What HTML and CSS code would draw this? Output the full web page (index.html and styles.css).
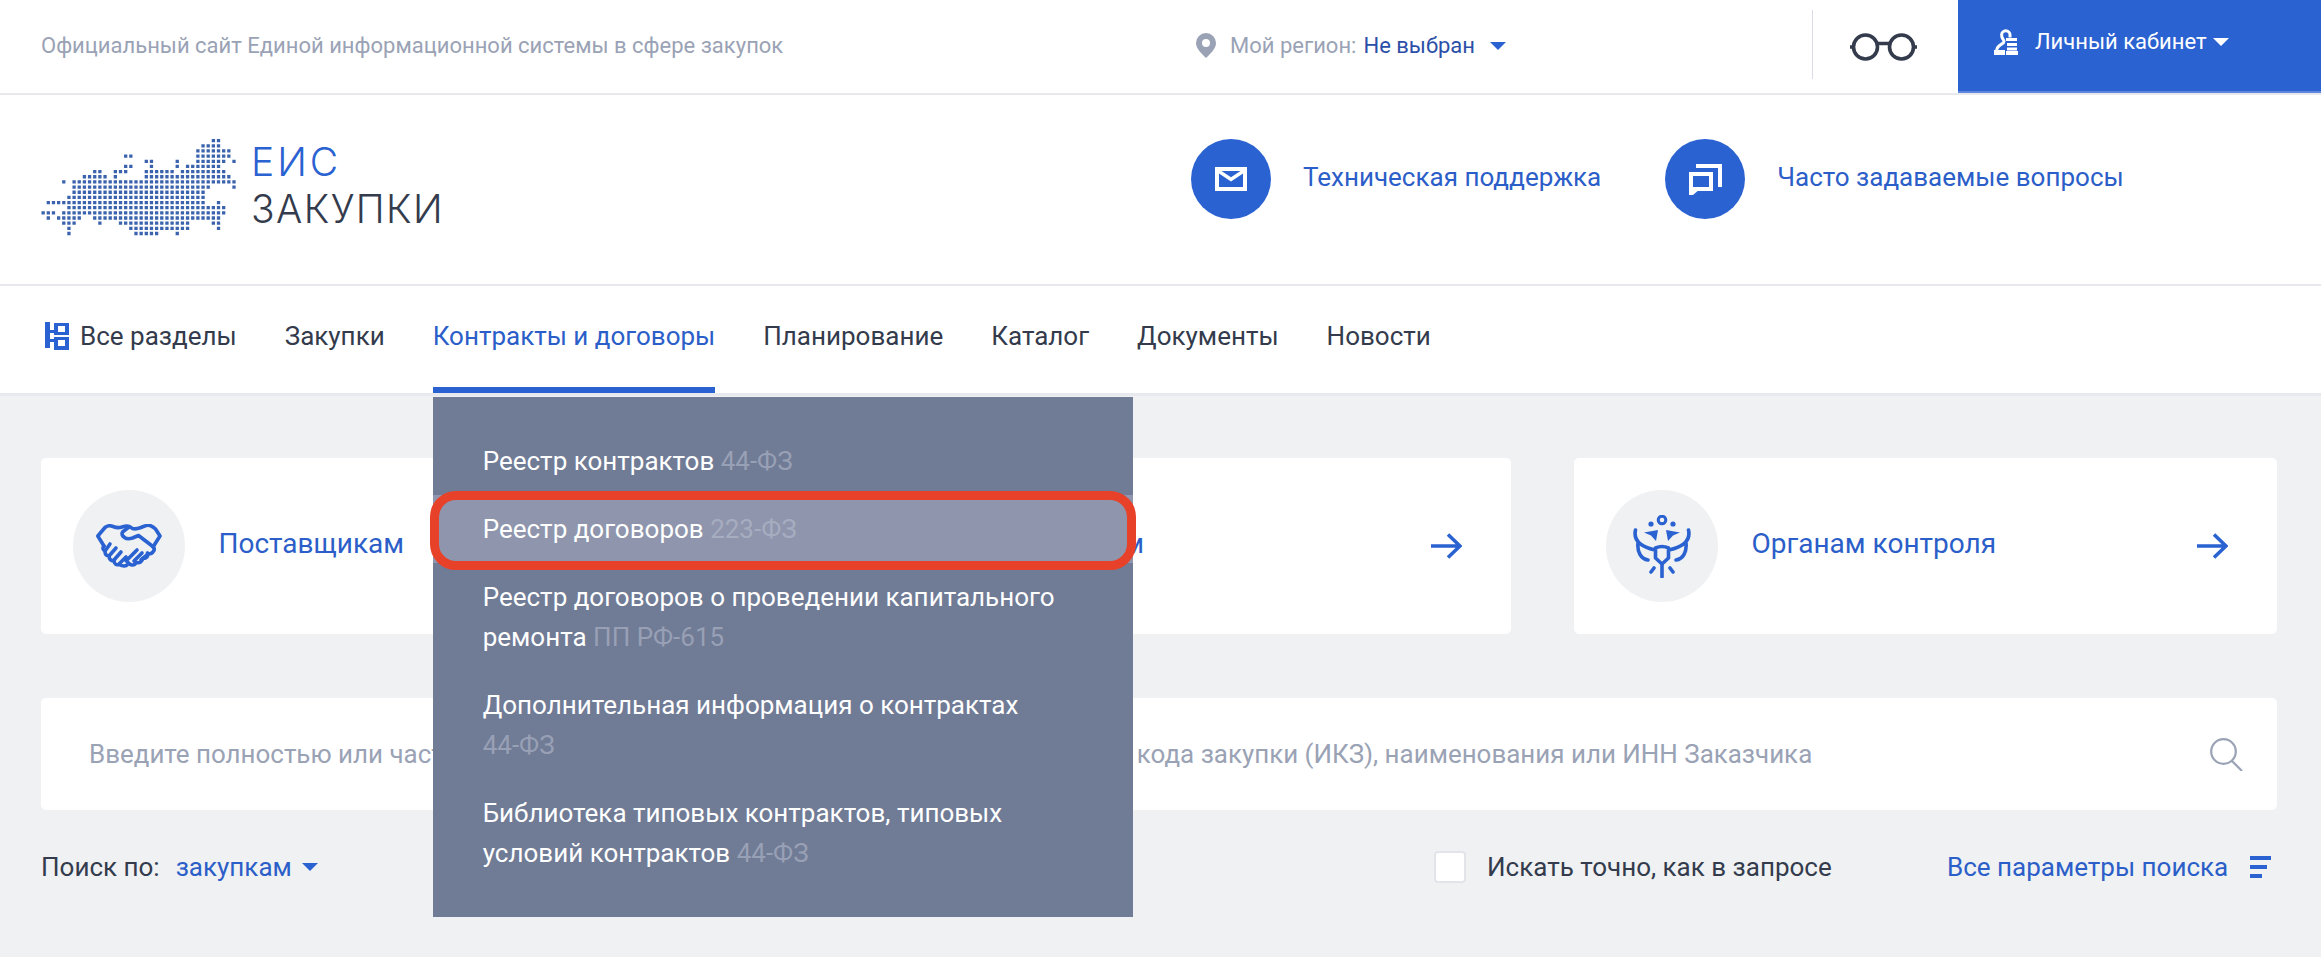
FILE: index.html
```html
<!DOCTYPE html>
<html lang="ru">
<head>
<meta charset="utf-8">
<title>ЕИС Закупки</title>
<link rel="stylesheet" href="styles.css">
</head>
<body>
<header class="topbar">
  <div class="site-name">Официальный сайт Единой информационной системы в сфере закупок</div>
  <div class="region">
    <svg class="pin" viewBox="0 0 20 25"><path fill-rule="evenodd" d="M10 0a10 10 0 0 1 10 10c0 6-6 11-10 15C6 21 0 16 0 10A10 10 0 0 1 10 0zm0 6a4 4 0 1 0 0 8 4 4 0 0 0 0-8z"/></svg>
    <span class="region-label">Мой регион:</span>
    <span class="region-value">Не выбран</span>
    <i class="caret region-caret"></i>
  </div>
  <div class="vision">
    <svg class="glasses" viewBox="0 0 67 28"><g fill="none" stroke="#333b4c" stroke-width="3.6"><circle cx="15.5" cy="14" r="12"/><circle cx="51.5" cy="14" r="12"/><path d="M27 10.5h13M0 14h3.500M63.500 14H67"/></g></svg>
  </div>
  <a class="account">
    <svg class="account-icon" viewBox="0 0 24 26"><g fill="none" stroke="#fff" stroke-width="3"><path d="M16 8.500V6a4.200 4.200 0 0 0-8.400 0c0 4 2.400 4.500 2.400 6.500C10 15.500 3 15 2.500 22"/><path d="M12 10.500h11M13 15.500h10M13 20h10"/></g><path fill="#fff" d="M0 21h11v5H0zM12 22h12v4H12z"/></svg>
    <span>Личный кабинет</span>
    <i class="caret account-caret"></i>
  </a>
</header>

<section class="masthead">
  <div class="logo">
    <svg class="logo-map" viewBox="0 0 38 19"><path fill="none" stroke="#3b63ad" stroke-width=".64" stroke-dasharray=".64 .36" d="M33 .32H34.640M31 1.320H34.640M30 2.320H36.640M16 3.320H17.640M30 3.320H36.640M20 4.320H21.640M26 4.320H26.640M30 4.320H35.640M37 4.320H37.640M16 5.320H17.640M21 5.320H21.640M26 5.320H26.640M28 5.320H34.640M10 6.320H11.640M14 6.320H16.640M20 6.320H24.640M25 6.320H25.640M27 6.320H35.640M8 7.320H12.640M14 7.320H14.640M20 7.320H36.640M4 8.320H4.640M6 8.320H37.640M6 9.320H32.640M37 9.320H37.640M6 10.320H31.640M5 11.320H31.640M1 12.320H31.640M34 12.320H34.640M5 13.320H35.640M0 14.320H2.640M4 14.320H35.640M1 15.320H1.640M3 15.320H7.640M10 15.320H34.640M4 16.320H6.640M11 16.320H11.640M15 16.320H28.640M33 16.320H34.640M5 17.320H5.640M17 17.320H28.640M34 17.320H34.640M5 18.320H5.640M18 18.320H22.640M26 18.320H26.640"/></svg>
    <div class="logo-text">
      <span class="logo-top">ЕИС</span>
      <span class="logo-bottom">ЗАКУПКИ</span>
    </div>
  </div>
  <nav class="help">
    <a class="help-link help-support">
      <span class="help-circle"><svg class="help-mail" viewBox="0 0 32 24"><path fill="#fff" fill-rule="evenodd" d="M0 0h32v24H0zM4 6.500V20h24V6.500L16 14.500zM6.500 4L16 10.300 25.500 4z"/></svg></span>
      <span class="help-text">Техническая поддержка</span>
    </a>
    <a class="help-link">
      <span class="help-circle"><svg class="help-faq" viewBox="0 0 33 31"><g fill="none" stroke="#fff" stroke-width="4"><path d="M7 2h24v21"/><path d="M2 10h20v15H2z"/></g><path fill="#fff" d="M0 25h11l-7 6H0z"/></svg></span>
      <span class="help-text">Часто задаваемые вопросы</span>
    </a>
  </nav>
</section>

<nav class="mainnav">
  <a class="nav-link nav-all">
    <svg class="nav-icon" viewBox="0 0 24 28"><path fill="#2b62d1" fill-rule="evenodd" d="M0 0h5v8h4V1h15v12H9V11H5v6h4v-2h15v13H9v-8H5v6H0zM13 4v6h7V4zM13 18v6h7v-6z"/></svg>
    Все разделы
  </a>
  <a class="nav-link">Закупки</a>
  <div class="nav-drop">
    <a class="nav-link nav-active">Контракты и договоры</a>
    <ul class="dropdown">
      <li class="drop-item">Реестр контрактов <span class="law">44-ФЗ</span></li>
      <li class="drop-item drop-hover">Реестр договоров <span class="law">223-ФЗ</span><span class="ring"></span></li>
      <li class="drop-item">Реестр договоров о проведении капитального ремонта <span class="law">ПП РФ-615</span></li>
      <li class="drop-item">Дополнительная информация о контрактах <span class="law">44-ФЗ</span></li>
      <li class="drop-item">Библиотека типовых контрактов, типовых условий контрактов <span class="law">44-ФЗ</span></li>
    </ul>
  </div>
  <a class="nav-link">Планирование</a>
  <a class="nav-link">Каталог</a>
  <a class="nav-link">Документы</a>
  <a class="nav-link">Новости</a>
</nav>

<main class="content">
  <div class="cards">
    <a class="card">
      <span class="card-circle"><svg class="hands" viewBox="0 0 66 45"><g fill="none" stroke="#2b62d1" stroke-width="3.600" stroke-linecap="round" stroke-linejoin="round"><path d="M8 22 1.800 12 9 3.500c3-2.500 5.500-2 8-1s6 1.500 9 .5 7-1.500 9 .5 6 1.500 10 0 6-3 9-2 4 2 5.500 3.500L64 12l-7 11"/><path d="M33 3 26.500 8c-1.500 2 0 4 2 5.500s5 1.500 8 .5l6-2.500 15 11.500c1.500 2 .5 4-1 5.500-1.800 1.500-4 1.500-5 .5 1 3-1 6-5 5.500 0 3-3 5-6 4-2 3-5 3-7 1.500l-4-4"/><path d="M8 22c-2 2-1 4 1 5 0 3 1 5 4 5 0 3 2 5 5 4.500 0 3 2 5 5 4 3 1.500 6 2 8 .5"/><path d="M14 20 9 27M20 24l-7 8M25 28l-7 8M30 33l-7 7M41 26l-9 9M46 29l-8 8M51 31l-6 5"/></g></svg></span>
      <span class="card-label">Поставщикам</span>
      <svg class="arrow" viewBox="0 0 31 26"><path fill="none" stroke="#2b62d1" stroke-width="3.600" d="M0 13h29M17 1.500 29 13 17 24.500"/></svg>
    </a>
    <a class="card">
      <span class="card-circle"></span>
      <span class="card-label">Заказчикам</span>
      <svg class="arrow" viewBox="0 0 31 26"><path fill="none" stroke="#2b62d1" stroke-width="3.600" d="M0 13h29M17 1.500 29 13 17 24.500"/></svg>
    </a>
    <a class="card">
      <span class="card-circle"><svg class="emblem" viewBox="0 0 58 63"><g fill="none" stroke="#2b62d1" stroke-width="3.600" stroke-linecap="round" stroke-linejoin="round"><circle cx="29" cy="5" r="3.800" stroke-width="3"/><path d="M2.500 15C0 26 9 32 22 35M55.500 15c2.500 11-6.500 17-19.500 20M5 28c-1 9 3 16 10 17M53 28c1 9-3 16-10 17M22.500 33q6.500-3 13 0v10l-6.500 6-6.500-6z"/><path d="M29 50v12M18 57l3-4M40 57l-3-4"/></g><g fill="#2b62d1"><circle cx="18" cy="9" r="2.600"/><circle cx="40" cy="9" r="2.600"/><path d="M11 17.500 25 15l-2 11-5-5.500zM47 17.500 33 15l2 11 5-5.500z"/></g></svg></span>
      <span class="card-label">Органам контроля</span>
      <svg class="arrow" viewBox="0 0 31 26"><path fill="none" stroke="#2b62d1" stroke-width="3.600" d="M0 13h29M17 1.500 29 13 17 24.500"/></svg>
    </a>
  </div>

  <div class="search">
    <span class="search-hint">Введите полностью или часть номера записи реестра закупок, идентификационного кода закупки (ИКЗ), наименования или ИНН Заказчика</span>
    <svg class="search-icon" viewBox="0 0 33 33"><g fill="none" stroke="#9aa2b5" stroke-width="2.200"><circle cx="13.500" cy="13.500" r="12.300"/><path d="m22 23 10 10"/></g></svg>
  </div>

  <div class="options">
    <div class="scope">
      <span class="scope-label">Поиск по:</span>
      <span class="scope-value">закупкам</span>
      <i class="caret scope-caret"></i>
    </div>
    <label class="exact"><span class="checkbox"></span>Искать точно, как в запросе</label>
    <a class="params">Все параметры поиска
      <span class="params-icon"><i class="bar bar-1"></i><i class="bar bar-2"></i><i class="bar bar-3"></i></span>
    </a>
  </div>
</main>
</body>
</html>
```

FILE: styles.css
```css
* { box-sizing: border-box; }
html, body { margin: 0; padding: 0; }
body {
  width: 2321px;
  height: 957px;
  overflow: hidden;
  background: #eff1f3;
  color: #333b4c;
  font-family: Roboto, "Liberation Sans", sans-serif;
}
a { color: inherit; text-decoration: none; }
svg { display: block; flex: none; }

.caret {
  display: block;
  flex: none;
  width: 0;
  height: 0;
  border-left: 8px solid transparent;
  border-right: 8px solid transparent;
  border-top: 8px solid #2b62d1;
}

/* top bar */
.topbar {
  display: flex;
  height: 95px;
  background: #fff;
  border-bottom: 2px solid #e7e9ee;
  font-size: 22px;
  align-items: stretch;
}
.site-name {
  flex: 0 0 1196px;
  padding-left: 41px;
  line-height: 91px;
  color: #9aa2b5;
}
.region {
  flex: 1;
  display: flex;
  align-items: center;
  padding-bottom: 2px;
}
.pin { width: 20px; height: 25px; fill: #9aa2b5; margin-right: 14px; }
.region-label { color: #9aa2b5; margin-right: 7px; }
.region-value { color: #2b4fa8; margin-right: 15px; }
.vision {
  flex: 0 0 146px;
  display: flex;
  align-items: center;
  padding-left: 38px;
  position: relative;
}
.vision::before {
  content: "";
  position: absolute;
  left: 0;
  top: 10px;
  bottom: 14px;
  width: 1px;
  background: #d9dce2;
}
.glasses { width: 67px; height: 28px; }
.account {
  flex: 0 0 363px;
  display: flex;
  align-items: center;
  height: 93px;
  margin-bottom: -1px;
  padding: 0 0 10px 36px;
  background: #2b62d1;
  color: #fff;
  box-shadow: inset 0 -2px 0 #5d86dc;
}
.account-icon { width: 24px; height: 26px; margin-right: 17px; }
.account-caret { margin-left: 6px; border-top-color: #fff; }

/* logo + help */
.masthead {
  display: flex;
  height: 191px;
  background: #fff;
  border-bottom: 2px solid #e7e9ee;
  padding-left: 41px;
}
.logo { display: flex; flex: 0 0 1150px; padding-top: 44px; }
.logo-map { width: 197px; height: 98px; margin-right: 13px; }
.logo-text {
  display: flex;
  flex-direction: column;
  font-family: Inter, sans-serif;
  font-weight: 300;
  font-size: 39px;
  line-height: 47px;
  margin-top: -1px;
  letter-spacing: 1.400px;
}
.logo-top { color: #2b62d1; letter-spacing: 3px; }
.logo-bottom { color: #333b4c; }
.help { display: flex; padding-top: 44px; }
.help-link {
  display: flex;
  align-items: center;
  height: 80px;
  color: #2b5ec8;
  font-size: 26px;
}
.help-text { padding-bottom: 4px; }
.help-support { margin-right: 64px; }
.help-circle {
  display: flex;
  align-items: center;
  justify-content: center;
  width: 80px;
  height: 80px;
  margin-right: 32px;
  border-radius: 50%;
  background: #2b62d1;
}
.help-mail { width: 32px; height: 24px; }
.help-faq { width: 33px; height: 31px; }

/* main navigation */
.mainnav {
  display: flex;
  gap: 48px;
  height: 110px;
  background: #fff;
  border-bottom: 3px solid #e7e9ee;
  padding-left: 45px;
  font-size: 26px;
}
.nav-link {
  display: flex;
  align-items: center;
  height: 107px;
  padding-bottom: 8px;
  white-space: nowrap;
}
.nav-icon { width: 24px; height: 28px; margin-right: 11px; }
.nav-drop { position: relative; }
.nav-active {
  color: #2b5ec8;
  box-shadow: inset 0 -6px 0 #2b62d1;
}
.dropdown {
  position: absolute;
  z-index: 5;
  left: 0;
  top: 111px;
  width: 700px;
  height: 520px;
  margin: 0;
  padding: 30px 0 0;
  list-style: none;
  background: #707b96;
  color: #fff;
}
.drop-item {
  position: relative;
  padding: 14px 50px;
  font-size: 26px;
  line-height: 40px;
}
.law { color: #98a0b5; white-space: nowrap; }
.drop-hover { background: #8e95ac; }
.drop-hover .law { color: #a7adc0; }
.ring {
  position: absolute;
  left: -3px;
  right: -3px;
  top: -4px;
  bottom: -7px;
  border: 9px solid #e8412a;
  border-radius: 26px;
}

/* content */
.content { padding: 62px 44px 0 41px; }
.cards { display: flex; gap: 63.500px; }
.card {
  display: flex;
  align-items: center;
  width: 703px;
  height: 176px;
  padding: 0 49px 0 32px;
  background: #fff;
  border-radius: 5px;
  color: #2b5ec8;
  font-size: 28px;
}
.card-circle {
  display: flex;
  align-items: center;
  justify-content: center;
  width: 112px;
  height: 112px;
  margin-right: 33.500px;
  border-radius: 50%;
  background: #eff1f3;
}
.card-label { flex: 1; padding-bottom: 5px; }
.hands { width: 66px; height: 45px; }
.emblem { width: 58px; height: 63px; }
.arrow { width: 31px; height: 26px; }

.search {
  display: flex;
  align-items: center;
  height: 112px;
  margin-top: 64px;
  padding: 0 34px 0 48px;
  background: #fff;
  border-radius: 5px;
  color: #9aa2b5;
  font-size: 25.950px;
}
.search-hint { flex: 1; white-space: nowrap; }
.search-icon { width: 33px; height: 33px; }

.options {
  display: flex;
  align-items: center;
  height: 32px;
  margin-top: 41px;
  font-size: 26px;
}
.scope { display: flex; align-items: center; flex: 0 0 1393px; }
.scope-label { margin-right: 16px; }
.scope-value { color: #2b5ec8; margin-right: 10px; }
.exact { display: flex; align-items: center; flex: 0 0 513px; }
.checkbox {
  width: 32px;
  height: 32px;
  margin-right: 21px;
  background: #fff;
  border: 2px solid #e2e4ea;
  border-radius: 4px;
}
.params { display: flex; align-items: center; color: #2b5ec8; }
.params-icon {
  display: flex;
  flex-direction: column;
  gap: 5px;
  margin-left: 22px;
}
.bar { display: block; height: 4px; background: #2b62d1; }
.bar-1 { width: 21px; }
.bar-2 { width: 17px; }
.bar-3 { width: 12px; }
```
